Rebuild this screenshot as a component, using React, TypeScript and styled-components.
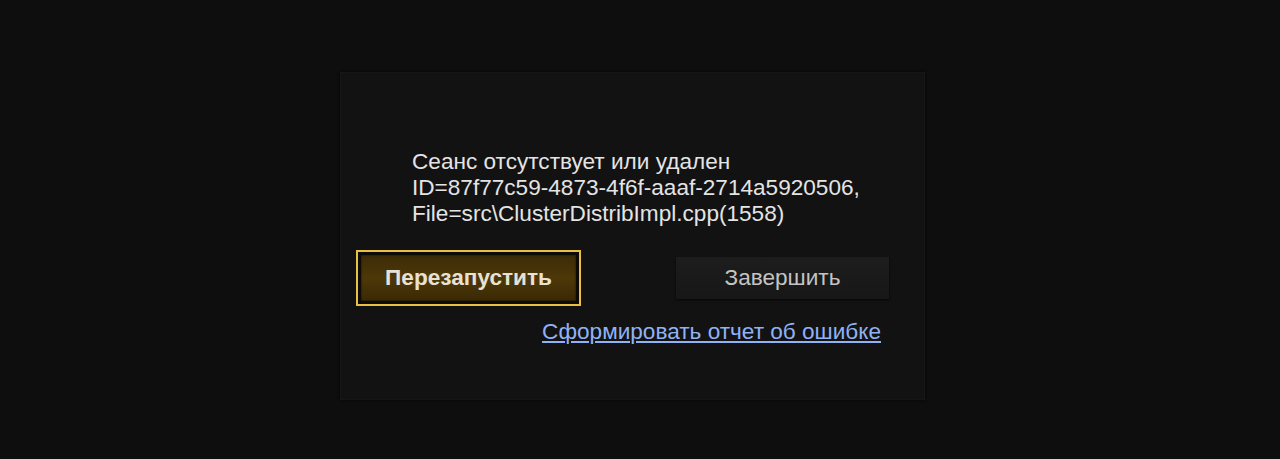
import styled, { createGlobalStyle } from 'styled-components';

const GlobalStyle = createGlobalStyle`
  html, body {
    margin: 0;
    padding: 0;
    background: #0e0e0e;
    font-family: "Liberation Sans", Arial, sans-serif;
  }
`;

const Page = styled.div`
  height: 459px;
  padding-top: 72px;
  box-sizing: border-box;
`;

const Card = styled.div`
  margin-left: 340px;
  width: 585px;
  height: 328px;
  box-sizing: border-box;
  background: #121212;
  border: 1px solid #161616;
  box-shadow: 0 0 3px rgba(0, 0, 0, 0.6);
  padding-top: 76px;
  display: flex;
  flex-direction: column;
`;

const Message = styled.div`
  margin-left: 71px;
  color: #e4e4e4;
  font-size: 22.6px;
  line-height: 26px;
`;

const Actions = styled.div`
  display: flex;
  justify-content: space-between;
  align-items: center;
  margin-top: 23px;
  padding: 0 35px 0 15px;
`;

const PrimaryButton = styled.button`
  width: 225px;
  height: 56px;
  padding: 3px;
  box-sizing: border-box;
  border: 2px solid #e9bf45;
  background: #0d0b05;
  cursor: pointer;
  font-family: inherit;
`;

const PrimaryFace = styled.span`
  display: flex;
  align-items: center;
  justify-content: center;
  height: 100%;
  background: linear-gradient(#3c2b06, #4d3809 50%, #3a2905);
  box-shadow: inset 0 0 2px rgba(0, 0, 0, 0.8);
  color: #e8e2d6;
  font-size: 22.6px;
  font-weight: bold;
`;

const SecondaryButton = styled.button`
  width: 213px;
  height: 42px;
  border: none;
  background: linear-gradient(#1d1d1d, #171717);
  box-shadow: 0 1px 2px rgba(0, 0, 0, 0.7);
  color: #c4c4c4;
  font-family: inherit;
  font-size: 22.6px;
  cursor: pointer;
`;

const ReportRow = styled.div`
  display: flex;
  justify-content: flex-end;
  margin-top: 13px;
  padding-right: 43px;
`;

const ReportLink = styled.a`
  color: #8fb2f6;
  font-size: 22.6px;
  line-height: 26px;
  text-decoration: underline;
  cursor: pointer;
`;

const App = () => {
  return (
    <Page>
      <GlobalStyle />
      <Card>
        <Message>
          Сеанс отсутствует или удален
          <br />
          ID=87f77c59-4873-4f6f-aaaf-2714a5920506,
          <br />
          File=src\ClusterDistribImpl.cpp(1558)
        </Message>
        <Actions>
          <PrimaryButton>
            <PrimaryFace>Перезапустить</PrimaryFace>
          </PrimaryButton>
          <SecondaryButton>Завершить</SecondaryButton>
        </Actions>
        <ReportRow>
          <ReportLink>Сформировать отчет об ошибке</ReportLink>
        </ReportRow>
      </Card>
    </Page>
  );
};

export default App;
